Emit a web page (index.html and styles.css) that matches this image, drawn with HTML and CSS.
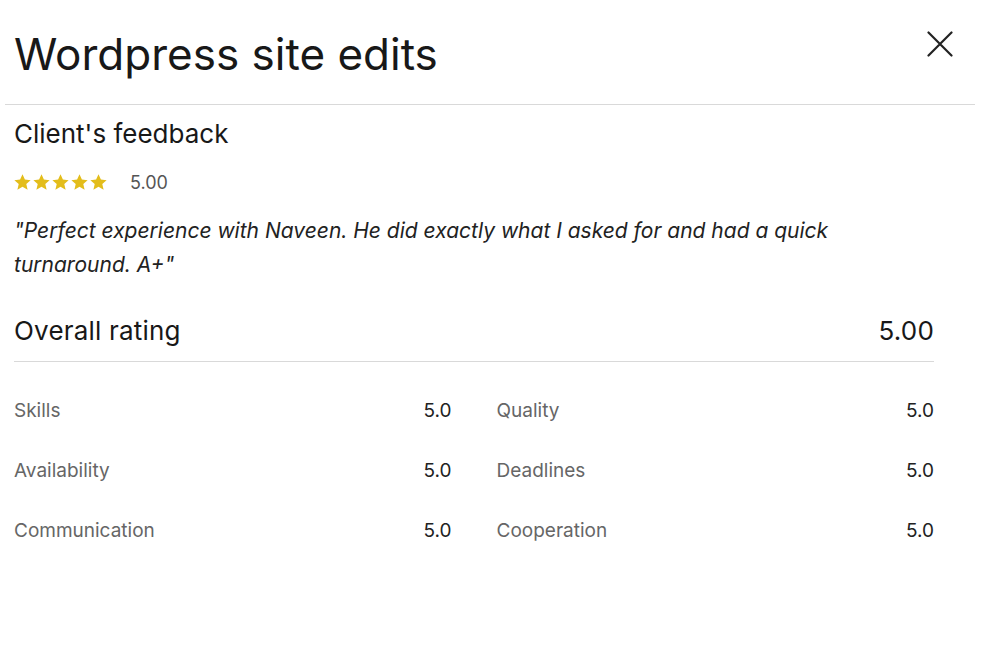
FILE: index.html
```html
<!DOCTYPE html>
<html>
<head>
<meta charset="utf-8">
<link rel="stylesheet" href="styles.css">
</head>
<body>
<div class="modal">
  <header class="head">
    <h1 class="title">Wordpress site edits</h1>
    <button class="close" aria-label="Close">
      <svg width="26" height="26" viewBox="0 0 26 26"><path d="M1.5 1.5 L24.5 24.5 M24.5 1.5 L1.5 24.5" stroke="#222" stroke-width="2.2" stroke-linecap="round" fill="none"/></svg>
    </button>
  </header>
  <section class="body">
    <h2 class="sub">Client's feedback</h2>
    <div class="stars-row">
      <div class="stars">
        <svg viewBox="1 1.5 22 20" class="star"><path d="M12 1.5l3.1 6.9 7.4.7-5.6 5 1.7 7.4L12 17.6 5.4 21.5l1.7-7.4-5.6-5 7.4-.7z"/></svg>
        <svg viewBox="1 1.5 22 20" class="star"><path d="M12 1.5l3.1 6.9 7.4.7-5.6 5 1.7 7.4L12 17.6 5.4 21.5l1.7-7.4-5.6-5 7.4-.7z"/></svg>
        <svg viewBox="1 1.5 22 20" class="star"><path d="M12 1.5l3.1 6.9 7.4.7-5.6 5 1.7 7.4L12 17.6 5.4 21.5l1.7-7.4-5.6-5 7.4-.7z"/></svg>
        <svg viewBox="1 1.5 22 20" class="star"><path d="M12 1.5l3.1 6.9 7.4.7-5.6 5 1.7 7.4L12 17.6 5.4 21.5l1.7-7.4-5.6-5 7.4-.7z"/></svg>
        <svg viewBox="1 1.5 22 20" class="star"><path d="M12 1.5l3.1 6.9 7.4.7-5.6 5 1.7 7.4L12 17.6 5.4 21.5l1.7-7.4-5.6-5 7.4-.7z"/></svg>
      </div>
      <span class="score">5.00</span>
    </div>
    <p class="quote">"Perfect experience with Naveen. He did exactly what I asked for and had a quick turnaround. A+"</p>
    <div class="overall">
      <span>Overall rating</span>
      <span>5.00</span>
    </div>
    <div class="grid">
      <div class="row"><span class="lbl">Skills</span><span class="val">5.0</span></div>
      <div class="row"><span class="lbl">Quality</span><span class="val">5.0</span></div>
      <div class="row"><span class="lbl">Availability</span><span class="val">5.0</span></div>
      <div class="row"><span class="lbl">Deadlines</span><span class="val">5.0</span></div>
      <div class="row"><span class="lbl">Communication</span><span class="val">5.0</span></div>
      <div class="row"><span class="lbl">Cooperation</span><span class="val">5.0</span></div>
    </div>
  </section>
</div>
</body>
</html>
```
FILE: styles.css
```css
* { box-sizing: border-box; }
html, body { margin: 0; padding: 0; background: #fff; }
body {
  font-family: Inter, "Liberation Sans", Arial, sans-serif;
  color: #181818;
  width: 983px;
  height: 652px;
  overflow: hidden;
}
.modal { padding: 0 8px 0 5px; }
.head {
  display: flex;
  justify-content: space-between;
  align-items: flex-start;
  border-bottom: 1px solid #d9d9d9;
  padding: 0 0 0 9px;
  height: 105px;
}
.title {
  margin: 0;
  padding-top: 26px;
  font-size: 44px;
  font-weight: 400;
  letter-spacing: 0;
  line-height: 56px;
}
.close {
  border: 0;
  background: none;
  padding: 0;
  margin: 31px 22px 0 0;
  width: 26px;
  height: 26px;
  display: block;
}
.close svg { display: block; }
.body { padding: 0 41px 0 9px; }
.sub {
  margin: 0;
  padding-top: 14px;
  font-size: 26px;
  font-weight: 400;
  line-height: 30px;
}
.stars-row {
  display: flex;
  align-items: center;
  margin-top: 22px;
  height: 22px;
}
.stars { display: flex; gap: 2px; }
.star { width: 17px; height: 16px; fill: #e3bd1b; display: block; }
.score { margin-left: 23px; font-size: 18px; color: #555; }
.quote {
  margin: 21px 0 0;
  font-style: italic;
  font-size: 21px;
  line-height: 34px;
  color: #222;
  max-width: 880px;
}
.overall {
  display: flex;
  justify-content: space-between;
  align-items: center;
  margin-top: 23px;
  height: 57px;
  padding-bottom: 5px;
  font-size: 26px;
  letter-spacing: 0.2px;
  border-bottom: 1px solid #d9d9d9;
  color: #181818;
}
.grid {
  display: grid;
  grid-template-columns: 1fr 1fr;
  column-gap: 45px;
  padding-top: 18px;
}
.row {
  display: flex;
  justify-content: space-between;
  align-items: center;
  height: 60px;
  font-size: 19px;
}
.lbl { color: #666; }
.val { color: #222; }
```
